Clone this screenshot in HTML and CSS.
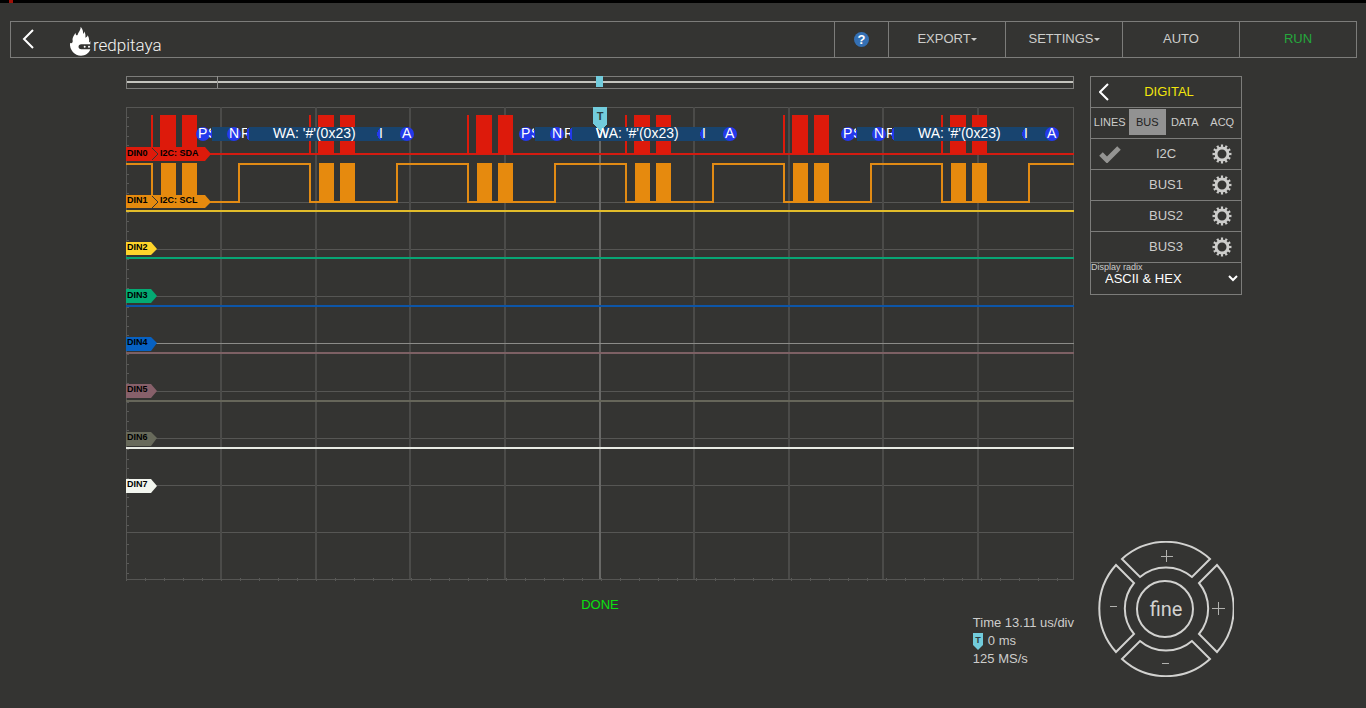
FILE: index.html
```
<!DOCTYPE html>
<html lang="en">

<head>
    <meta charset="UTF-8">
    <meta name="viewport" content="width=device-width, initial-scale=1.0">
    <title>Logic analyzer</title>
    <link rel="stylesheet" href="styles.css">
</head>

<body>
    <div class="strip"></div>
    <header class="topbar">
        <button class="back" aria-label="Back">
            <svg width="12" height="20" viewBox="0 0 12 20"><path d="M11 1L2 10l9 9" /></svg>
        </button>
        <a class="logo" href="#">
            <svg width="22" height="30" viewBox="208 78 66 90">
                <path fill="#fff" d="M211 128C215 132 220 128 219 122C217 112 224 106 227 98C229 106 231 108 234 104C236 96 243 92 243 80C250 88 251 96 250 102C253 100 254 97 254 94C258 102 258 108 257 113C261 112 263 110 264 106C269 114 269 122 268 127C270 127 271 125 272 122V133H245C234 133 234 148 245 148H272C268 160 257 167 244 167C225 167 209 150 211 128Z" />
                <circle fill="#fff" cx="255" cy="140" r="3" />
                <circle fill="#fff" cx="268" cy="140" r="3" />
            </svg>
            <span>redpitaya</span>
        </a>
        <button class="help" aria-label="Help"><span>?</span></button>
        <button class="menu">EXPORT<i class="caret"></i></button>
        <button class="menu">SETTINGS<i class="caret"></i></button>
        <button class="menu">AUTO</button>
        <button class="menu run">RUN</button>
    </header>

    <main class="main">
        <section class="scope">
            <svg class="overview" viewBox="0 0 948 13">
                <rect class="frame" x="0" y="0" width="947" height="12" />
                <path stroke="#c4c4be" stroke-width="2" d="M1 6H947" />
                <path stroke="#8f8f8c" d="M91 0V12" />
                <rect fill="#72ccdc" x="470" y="0" width="7" height="11" />
            </svg>

            <svg class="plot" viewBox="0 0 948 474">
                <defs>
                    <g id="sda">
                        <path stroke="#dd1a0b" stroke-width="2" d="M0 8V47" />
                        <path fill="#dd1a0b" d="M8 8H24V47H8ZM30 8H45V47H30Z" />
                    </g>
                    <g id="scl">
                        <path stroke="#e28b14" stroke-width="2" fill="none" d="M0 56V95H87V57H158" />
                        <path fill="#e68a0e" d="M9 56H24V95H9ZM30 56H45V95H30Z" />
                    </g>
                    <g id="packet">
                        <path fill="#18446f" d="M9 20H31V34H9ZM46 20H204V34H46Z" />
                        <g fill="#2439ec">
                            <path d="M8 23Q4 27 8 31H9V23ZM46 20Q40 27 46 34ZM178 21Q170 27 178 33Z" />
                            <circle cx="0" cy="27" r="7" />
                            <circle cx="31" cy="27" r="7" />
                            <circle cx="204" cy="27" r="7" />
                        </g>
                        <g class="bus-text">
                            <text x="-5" y="31">P</text>
                            <text x="26" y="31">N</text>
                            <text x="70" y="31">WA: '#'(0x23)</text>
                            <text x="199" y="31">A</text>
                            <text x="176" y="31">I</text>
                            <text x="5" y="31" clip-path="url(#clip-s)">S</text>
                            <text x="38" y="31" clip-path="url(#clip-r)">R</text>
                        </g>
                    </g>
                    <clipPath id="clip-s"><rect x="5" y="18" width="3" height="18" /></clipPath>
                    <clipPath id="clip-r"><rect x="38" y="18" width="6" height="18" /></clipPath>
                    <pattern id="ticks-y" width="5" height="95" patternUnits="userSpaceOnUse">
                        <path stroke="#5a5a58" d="M0 10H3M0 19H3M0 29H3M0 38H3M0 57H3M0 67H3M0 76H3M0 86H3" />
                    </pattern>
                    <pattern id="ticks-x" width="19" height="474" patternUnits="userSpaceOnUse">
                        <path stroke="#5a5a58" d="M19 471V474M0 471V474" />
                    </pattern>
                </defs>

                <!-- grid -->
                <rect fill="url(#ticks-y)" x="0" y="0" width="4" height="474" />
                <rect fill="url(#ticks-x)" x="0" y="470" width="948" height="4" />
                <rect class="grid" x="0" y="0" width="947" height="472" />
                <path class="grid" d="M0 47H948M0 95H948M0 142H948M0 189H948M0 284H948M0 331H948M0 378H948M0 425H948" />
                <path class="grid wide" d="M95 0V472M190 0V472M284 0V472M379 0V472M568 0V472M663 0V472M757 0V472M852 0V472" />
                <path stroke="#686866" stroke-width="2" d="M474 0V472" />
                <path stroke="#8b8b88" d="M0 236H948" />

                <!-- digital lines -->
                <path stroke="#d41b10" stroke-width="2" d="M0 47H948" />
                <use href="#sda" x="26" />
                <use href="#sda" x="184" />
                <use href="#sda" x="342" />
                <use href="#sda" x="500" />
                <use href="#sda" x="658" />
                <use href="#sda" x="816" />
                <path stroke="#e28b14" stroke-width="2" d="M0 57H26" />
                <use href="#scl" x="26" />
                <use href="#scl" x="184" />
                <use href="#scl" x="342" />
                <use href="#scl" x="500" />
                <use href="#scl" x="658" />
                <use href="#scl" x="816" />
                <g stroke-width="2">
                    <path stroke="#e2bc2a" d="M0 104H948" />
                    <path stroke="#08a574" d="M0 151H948" />
                    <path stroke="#0c55a8" d="M0 199H948" />
                    <path stroke="#7d6064" d="M0 246H948" />
                    <path stroke="#66665a" d="M0 294H948" />
                    <path stroke="#e8ebe4" d="M0 341H948" />
                </g>

                <!-- decoded bus -->
                <use href="#packet" x="77" />
                <use href="#packet" x="400" />
                <use href="#packet" x="722" />

                <!-- channel tags -->
                <g class="tag">
                    <path fill="#dd1a0b" d="M0 40H79L85 47L79 54H0Z" />
                    <path class="notch" d="M26 41L32 47L26 53" />
                    <text x="1" y="49">DIN0</text>
                    <text x="34" y="49">I2C: SDA</text>
                    <path fill="#e68a0e" d="M0 88H79L85 95L79 101H0Z" />
                    <path class="notch" d="M26 89L32 95L26 101" />
                    <text x="1" y="96">DIN1</text>
                    <text x="34" y="96">I2C: SCL</text>
                    <path fill="#ffd42a" d="M0 135H25L31 142L25 148H0Z" />
                    <text x="1" y="143">DIN2</text>
                    <path fill="#04aa73" d="M0 182H25L31 189L25 196H0Z" />
                    <text x="1" y="191">DIN3</text>
                    <path fill="#0761c2" d="M0 230H25L31 236L25 244H0Z" />
                    <text x="1" y="238">DIN4</text>
                    <path fill="#87606a" d="M0 277H25L31 284L25 291H0Z" />
                    <text x="1" y="285">DIN5</text>
                    <path fill="#686a5b" d="M0 325H25L31 331L25 339H0Z" />
                    <text x="1" y="333">DIN6</text>
                    <path fill="#f2f5ee" d="M0 372H25L31 379L25 386H0Z" />
                    <text x="1" y="380">DIN7</text>
                </g>

                <!-- trigger marker -->
                <path fill="#72ccdc" d="M467 0H481V17L474 24L467 17Z" />
                <text class="trigger-text" x="474" y="13">T</text>
                <svg x="467" y="18" width="14" height="18" viewBox="467 18 14 18">
                    <text class="bus-text" x="470" y="31">WA: '#'(0x23)</text>
                </svg>
            </svg>

            <div class="status">DONE</div>
            <div class="readout">
                <div>Time 13.11 us/div</div>
                <div class="trigger">
                    <svg width="10" height="17" viewBox="0 0 10 17">
                        <path fill="#72ccdc" d="M0 0H10V12L5 17L0 12Z" />
                        <text class="small-t" x="5" y="10">T</text>
                    </svg>
                    0 ms
                </div>
                <div>125 MS/s</div>
            </div>
        </section>

        <aside class="side">
            <div class="panel">
                <div class="row title">
                    <button class="back" aria-label="Close panel">
                        <svg width="10" height="18" viewBox="0 0 10 18"><path d="M9 1L1 9l8 8" /></svg>
                    </button>
                    <span>DIGITAL</span>
                </div>
                <div class="row tabs">
                    <button>LINES</button>
                    <button class="active">BUS</button>
                    <button>DATA</button>
                    <button>ACQ</button>
                </div>
                <div class="row">
                    <svg class="check" width="22" height="18" viewBox="0 0 22 18"><path d="M2 9L8 15L20 3" /></svg>
                    <span>I2C</span>
                    <button class="gear" aria-label="I2C settings">
                        <svg width="20" height="20" viewBox="0 0 20 20">
                            <circle cx="10" cy="10" r="6" />
                            <circle class="teeth" cx="10" cy="10" r="8" pathLength="240" />
                        </svg>
                    </button>
                </div>
                <div class="row">
                    <span>BUS1</span>
                    <button class="gear" aria-label="BUS1 settings">
                        <svg width="20" height="20" viewBox="0 0 20 20">
                            <circle cx="10" cy="10" r="6" />
                            <circle class="teeth" cx="10" cy="10" r="8" pathLength="240" />
                        </svg>
                    </button>
                </div>
                <div class="row">
                    <span>BUS2</span>
                    <button class="gear" aria-label="BUS2 settings">
                        <svg width="20" height="20" viewBox="0 0 20 20">
                            <circle cx="10" cy="10" r="6" />
                            <circle class="teeth" cx="10" cy="10" r="8" pathLength="240" />
                        </svg>
                    </button>
                </div>
                <div class="row">
                    <span>BUS3</span>
                    <button class="gear" aria-label="BUS3 settings">
                        <svg width="20" height="20" viewBox="0 0 20 20">
                            <circle cx="10" cy="10" r="6" />
                            <circle class="teeth" cx="10" cy="10" r="8" pathLength="240" />
                        </svg>
                    </button>
                </div>
                <div class="radix">
                    <label for="radix">Display radix</label>
                    <select id="radix">
                        <option>ASCII &amp; HEX</option>
                    </select>
                </div>
            </div>

            <div class="pad">
                <svg viewBox="0 0 136 136">
                    <g stroke="#d2d2d0" stroke-width="2" fill="none">
                        <path d="M24 18A65 65 0 0 1 112 18L94 36A40 40 0 0 0 42 36Z" />
                        <path d="M24 118A65 65 0 0 0 112 118L94 100A40 40 0 0 1 42 100Z" />
                        <path d="M18 24A65 65 0 0 0 18 111L36 93A40 40 0 0 1 36 42Z" />
                        <path d="M119 24A65 65 0 0 1 119 111L101 93A40 40 0 0 0 101 42Z" />
                        <circle cx="67" cy="68" r="28" />
                    </g>
                    <path stroke="#b4b4b2" d="M63 15.5H75M68.500 9V21M114 67.500H127M120.500 61V74M12 65.500H19M64 122.500H71" />
                </svg>
                <button class="up" aria-label="Increase vertical"></button>
                <button class="left" aria-label="Decrease horizontal"></button>
                <button class="fine">fine</button>
                <button class="right" aria-label="Increase horizontal"></button>
                <button class="down" aria-label="Decrease vertical"></button>
            </div>
        </aside>
    </main>
</body>

</html>
```
FILE: styles.css
```
* {
    box-sizing: border-box;
}

body {
    margin: 0;
    min-height: 100vh;
    display: flex;
    flex-direction: column;
    background-color: #343432;
    color: #cdcdcb;
    font-family: "Liberation Sans", Arial, sans-serif;
    font-size: 13px;
    line-height: 18px;
}

button {
    padding: 0;
    border: 0;
    background: none;
    color: inherit;
    font: inherit;
    cursor: pointer;
}

svg {
    display: block;
}

.strip {
    height: 3px;
    background: linear-gradient(90deg, #000 9px, #a01008 9px, #a01008 13px, #000 13px);
}

/* top bar */
.topbar {
    display: flex;
    height: 37px;
    margin: 18px 9px 0 10px;
    border: 1px solid #7c7c7a;
}

.back path {
    fill: none;
    stroke: #fff;
    stroke-width: 2;
}

.topbar .back {
    padding: 0 11px 2px;
}

.logo {
    display: flex;
    flex: 1;
    margin-left: 24px;
    padding-top: 4px;
    color: #f4f4f2;
    text-decoration: none;
    font-family: Roboto, sans-serif;
    font-size: 17px;
    font-weight: 300;
}

.logo span {
    margin-left: 2px;
    padding-top: 10px;
}

.menu,
.help {
    border-left: 1px solid #7c7c7a;
}

.menu {
    display: flex;
    align-items: center;
    justify-content: center;
    width: 117px;
    padding-bottom: 2px;
}

.help {
    display: flex;
    align-items: center;
    justify-content: center;
    width: 54px;
}

.help span {
    width: 15px;
    height: 15px;
    border-radius: 50%;
    background-color: #3470b4;
    color: #fff;
    font-weight: bold;
    line-height: 15px;
}

.caret {
    border: 3px solid transparent;
    border-top-color: #cdcdcb;
    border-bottom: 0;
    margin-top: 2px;
}

.run {
    color: #25a83c;
}

/* page body */
.main {
    display: flex;
    flex: 1;
    gap: 16px;
    padding: 18px 124px 31px 126px;
}

.scope {
    flex: 1;
    display: flex;
    flex-direction: column;
}

.overview,
.plot {
    width: 100%;
    height: auto;
    shape-rendering: crispEdges;
    overflow: hidden;
}

.overview {
    margin-bottom: 18px;
}

.frame {
    fill: none;
    stroke: #7c7c7a;
    transform: translate(0.5px, 0.5px);
}

.grid {
    fill: none;
    stroke: #565654;
}

rect.grid {
    transform: translate(0.5px, 0.5px);
}

.wide {
    stroke: #4b4b49;
    stroke-width: 2;
}

.bus-text {
    fill: #fff;
    font-size: 14px;
}

.plot circle,
.tag {
    shape-rendering: auto;
}

.tag text {
    fill: #000;
    font-size: 9px;
    font-weight: bold;
}

.notch {
    fill: none;
    stroke: #343432;
}

.trigger-text,
.small-t {
    fill: #2b3c40;
    font-size: 9px;
    font-weight: bold;
    text-anchor: middle;
}

.trigger-text {
    font-size: 11px;
}

.status {
    margin-top: 15px;
    text-align: center;
    color: #0be010;
}

.readout {
    align-self: flex-end;
}

.trigger {
    display: flex;
    align-items: center;
    gap: 5px;
}

/* side panel */
.side {
    display: flex;
    flex-direction: column;
    justify-content: space-between;
    width: 152px;
}

.panel {
    border: 1px solid #7c7c7a;
}

.row {
    display: grid;
    grid-template-columns: 38px 1fr 38px;
    align-items: center;
    height: 31px;
    border-bottom: 1px solid #7c7c7a;
    text-align: center;
}

.row span {
    grid-column: 2;
}

.title {
    color: #f2e60c;
    grid-template-columns: 26px 1fr 20px;
}

.title .back {
    padding-left: 8px;
}

.tabs {
    grid-template-columns: repeat(4, 1fr);
    align-items: stretch;
    font-size: 11px;
}

.tabs button {
    margin-bottom: 2px;
}

.tabs .active {
    margin: 1px 0 3px;
    background-color: #929292;
    color: #222;
}

.check {
    justify-self: center;
    fill: none;
    stroke: #949492;
    stroke-width: 5;
}

.gear svg {
    margin: auto;
    fill: none;
    stroke: #cdcdcb;
    stroke-width: 3;
}

.teeth {
    stroke-dasharray: 10 10;
    stroke-dashoffset: 5;
}

.radix {
    height: 31px;
}

.radix label {
    display: block;
    height: 7px;
    font-size: 9px;
    line-height: 9px;
}

.radix select {
    width: 100%;
    height: 16px;
    padding: 0 0 0 10px;
    border: 0;
    background-color: transparent;
    color: #fff;
    font: inherit;
}

.radix option {
    background-color: #343432;
}

/* navigation pad */
.pad {
    display: grid;
    grid-template: repeat(3, 1fr) / repeat(3, 1fr);
    align-self: center;
    width: 136px;
    height: 136px;
}

.pad svg {
    grid-area: 1 / 1 / 4 / 4;
}

.up {
    grid-area: 1 / 2;
}

.left {
    grid-area: 2 / 1;
}

.fine {
    grid-area: 2 / 2;
    color: #d2d2d0;
    font-family: Roboto, sans-serif;
    font-size: 20px;
}

.right {
    grid-area: 2 / 3;
}

.down {
    grid-area: 3 / 2;
}
```
